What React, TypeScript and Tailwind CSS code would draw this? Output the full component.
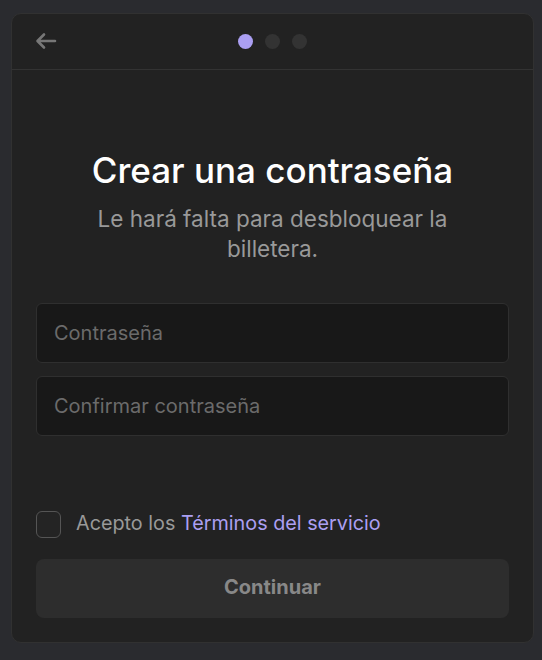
import React, { useState } from 'react';

const Dots: React.FC<{ step: number }> = ({ step }) => (
    <div className="flex items-center gap-[12px]">
        {[0, 1, 2].map(i => (
            <span
                key={i}
                className={i === step ? "w-[15px] h-[15px] rounded-full bg-[#ab9ff2]" : "w-[15px] h-[15px] rounded-full bg-[#333333]"}
            />
        ))}
    </div>
);

export default function App() {
    const [pass, setPass] = useState("");
    const [confirm, setConfirm] = useState("");
    const [accepted, setAccepted] = useState(false);

    return (
        <div className="w-[542px] h-[660px] bg-[#2a2b2f] pt-[13px] pl-[11px]" style={{ fontFamily: 'Inter, "Noto Sans", sans-serif' }}>
            <div className="w-[523px] h-[630px] bg-[#222222] border border-[#313131] rounded-[10px] flex flex-col">
                <div className="relative h-[56px] border-b border-[#333333] flex items-center justify-center">
                    <button className="absolute left-[23px] top-[18px] text-[#777777]">
                        <svg width="22" height="18" viewBox="0 0 22 18" fill="none" stroke="currentColor" strokeWidth="2.6" strokeLinecap="round" strokeLinejoin="round">
                            <path d="M20 9H3M9 2.5L2.5 9 9 15.5" />
                        </svg>
                    </button>
                    <Dots step={0} />
                </div>

                <div className="flex flex-col flex-1 px-[24px] pb-[23px]">
                    <h1 className="mt-[79px] text-[35px] leading-[42px] font-medium text-white text-center">Crear una contraseña</h1>
                    <p className="mt-[13px] mx-auto w-[390px] text-[22.5px] leading-[30px] text-[#999999] text-center">
                        Le hará falta para desbloquear la billetera.
                    </p>

                    <div className="mt-[39px] flex flex-col gap-[13px]">
                        <input
                            type="password"
                            value={pass}
                            onChange={e => setPass(e.target.value)}
                            placeholder="Contraseña"
                            className="h-[60px] rounded-[6px] bg-[#181818] border border-[#2f2f2f] px-[17px] text-[20px] text-white placeholder-[#6b6b6b] outline-none"
                        />
                        <input
                            type="password"
                            value={confirm}
                            onChange={e => setConfirm(e.target.value)}
                            placeholder="Confirmar contraseña"
                            className="h-[60px] rounded-[6px] bg-[#181818] border border-[#2f2f2f] px-[17px] text-[20px] text-white placeholder-[#6b6b6b] outline-none"
                        />
                    </div>

                    <div className="mt-auto flex items-center gap-[15px]">
                        <button
                            onClick={() => setAccepted(!accepted)}
                            className="w-[25px] h-[27px] rounded-[6px] border border-[#555555] bg-[#242424]"
                        />
                        <span className="text-[19.8px] text-[#999999]">
                            Acepto los <a className="text-[#ab9ff2]">Términos del servicio</a>
                        </span>
                    </div>

                    <button className="mt-[20px] mb-[1px] h-[59px] pb-[3px] rounded-[8px] bg-[#2d2d2d] text-[20px] font-bold text-[#888888]">
                        Continuar
                    </button>
                </div>
            </div>
        </div>
    );
}
